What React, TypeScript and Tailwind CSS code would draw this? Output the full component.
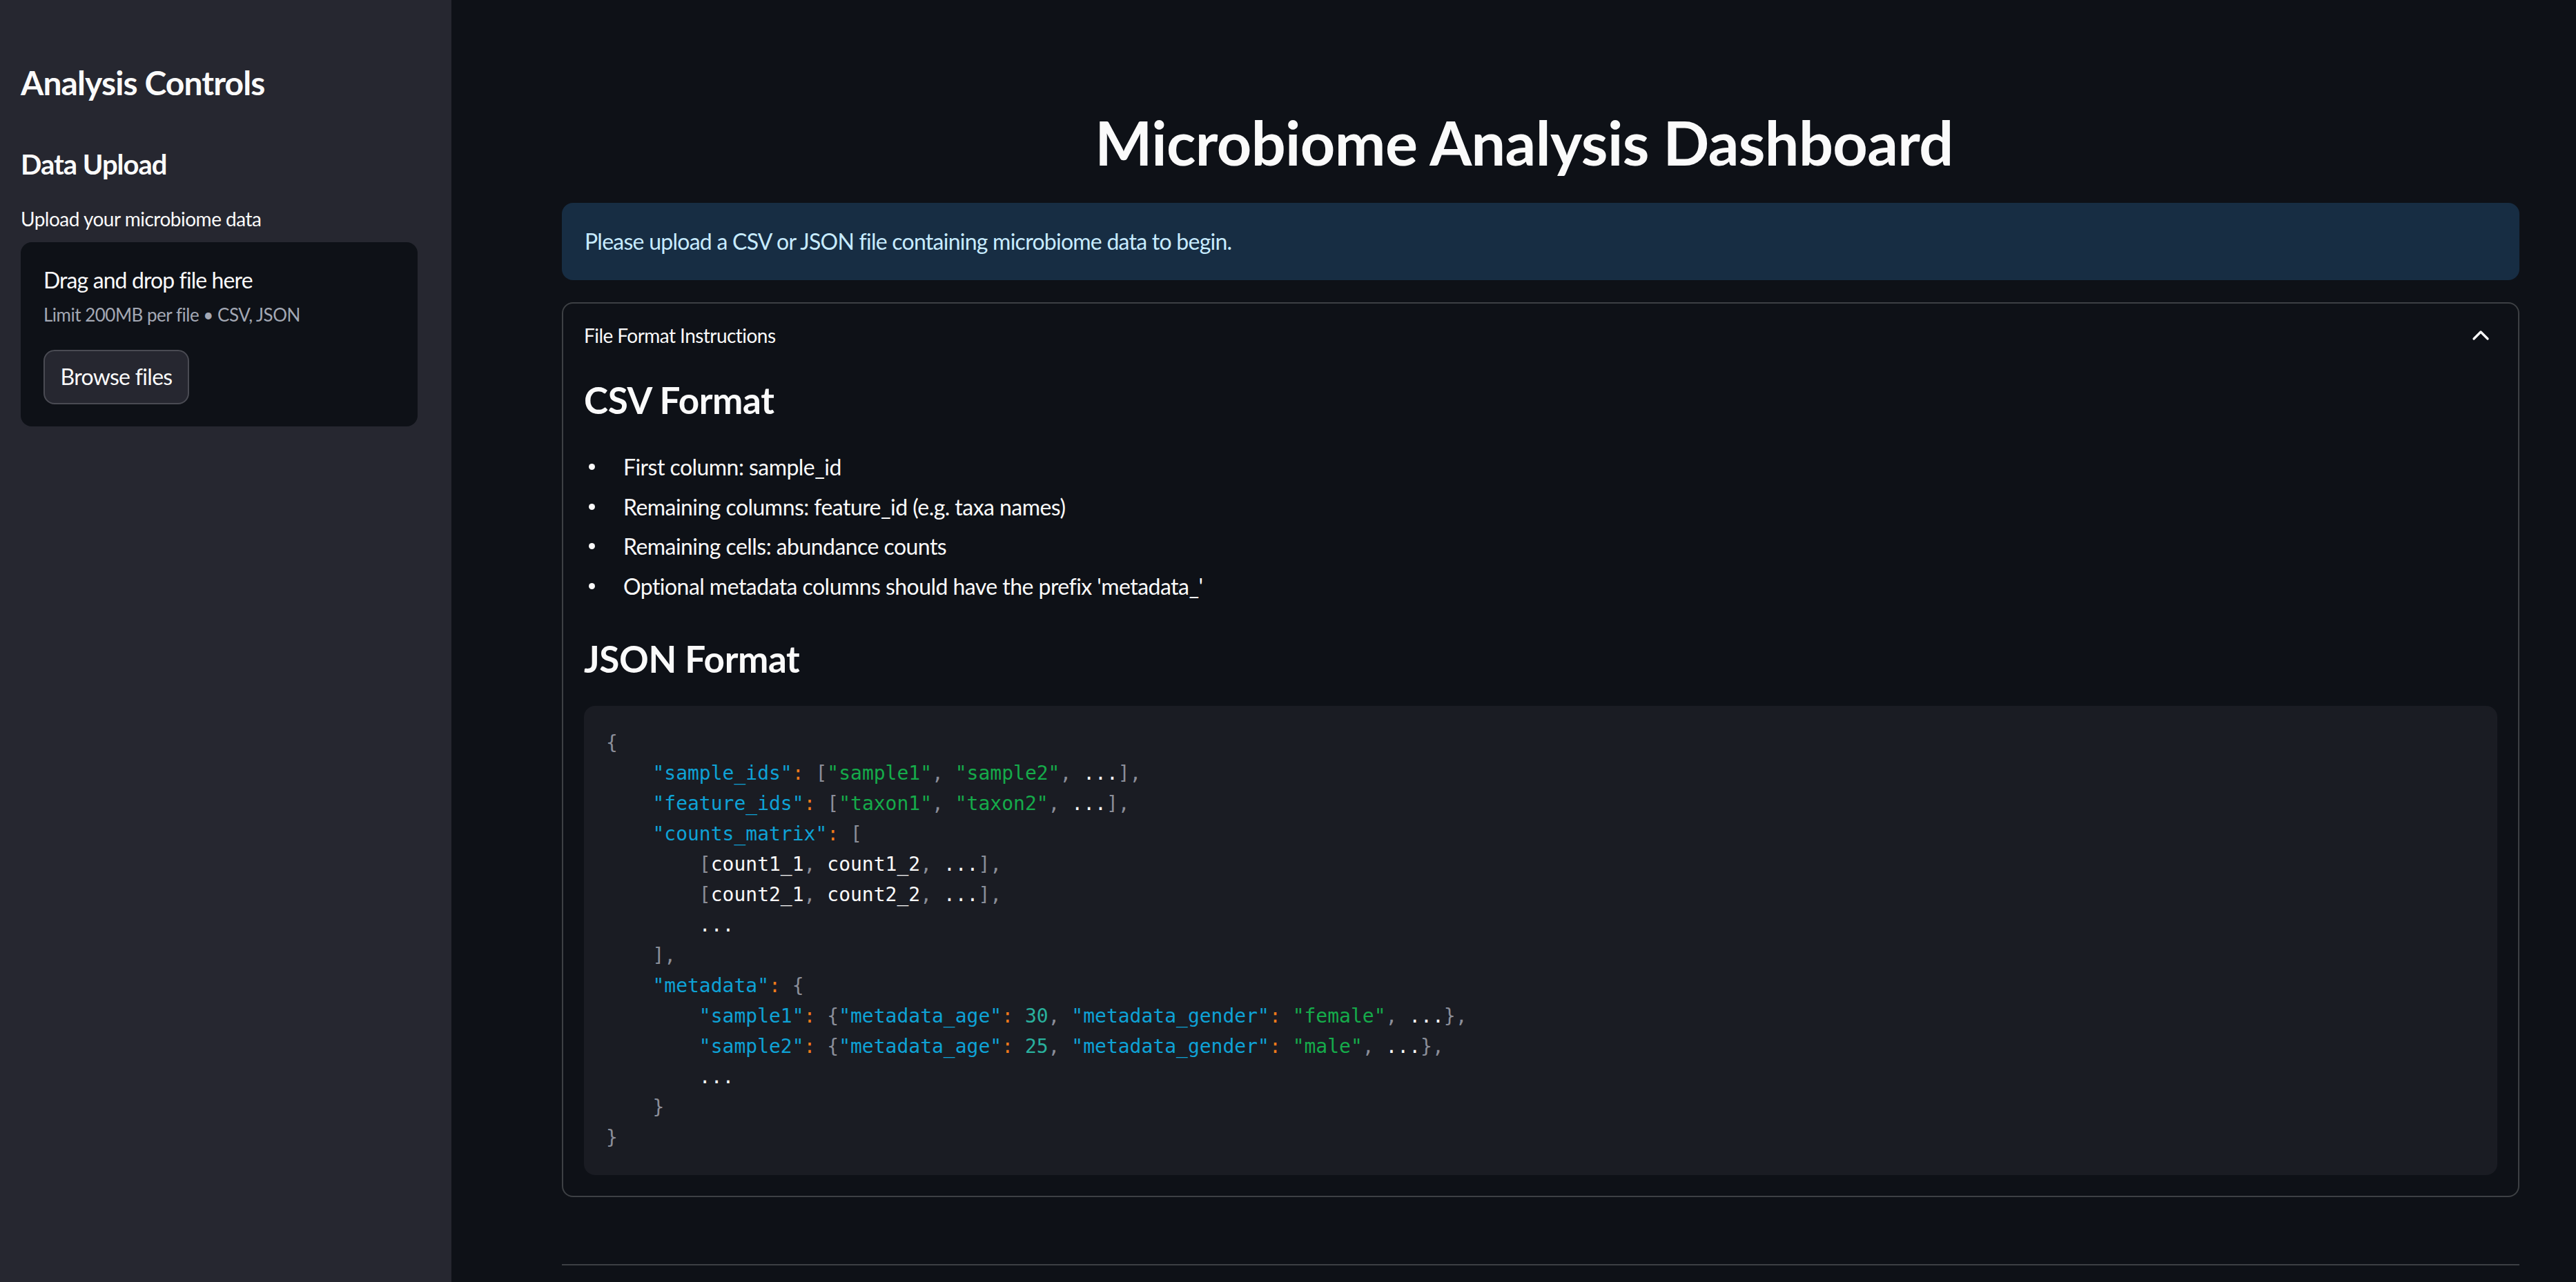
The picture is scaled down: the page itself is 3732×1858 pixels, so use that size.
import React from "react";

const K = ({ children }: { children: React.ReactNode }) => <span className="text-[#0ea2d6]">{children}</span>;
const S = ({ children }: { children: React.ReactNode }) => <span className="text-[#15ab4a]">{children}</span>;
const C = () => <span className="text-[#f07a1a]">:</span>;
const P = ({ children }: { children: React.ReactNode }) => <span className="text-[#8b8e99]">{children}</span>;
const N = ({ children }: { children: React.ReactNode }) => <span className="text-[#29b09d]">{children}</span>;
const W = ({ children }: { children: React.ReactNode }) => <span className="text-[#fafafa]">{children}</span>;

function Line({ children }: { children?: React.ReactNode }) {
  return <div className="h-[44px] leading-[44px] whitespace-pre">{children}</div>;
}

function Bullet({ children }: { children: React.ReactNode }) {
  return (
    <li className="flex items-center h-[51px] mb-[6.6px] text-[32px] leading-[51px] tracking-[-0.55px]">
      <span className="w-[57px] shrink-0 flex">
        <span className="ml-[7px] w-[9px] h-[9px] rounded-full bg-[#fafafa]" />
      </span>
      <span>{children}</span>
    </li>
  );
}

export default function App() {
  return (
    <div
      className="flex w-full h-[1858px] overflow-hidden bg-[#0e1117] text-[#fafafa]"
      style={{ fontFamily: "Lato, 'Noto Sans', sans-serif" }}
    >
      {/* Sidebar */}
      <aside className="w-[654px] shrink-0 bg-[#262730] pl-[30px] pr-[49px] pt-[91px]">
        <h2 className="text-[48px] leading-[57.6px] font-bold tracking-[-0.9px]">Analysis Controls</h2>
        <h3 className="mt-[65px] text-[40px] leading-[48px] font-bold tracking-[-1px]">Data Upload</h3>
        <div className="mt-[34px] text-[28px] leading-[42px] tracking-[-0.5px]">Upload your microbiome data</div>
        <div className="mt-[13px] h-[267px] rounded-[16px] bg-[#0e1117] pl-[33px] pt-[31px]">
          <div className="text-[32px] leading-[48px] tracking-[-0.9px]">Drag and drop file here</div>
          <div className="mt-[5px] text-[26px] leading-[42px] tracking-[-0.5px] text-[#a3a8b4]">Limit 200MB per file • CSV, JSON</div>
          <button className="mt-[30px] w-[211px] h-[79px] rounded-[16px] border-2 border-[#4a4b53] bg-[#262730] text-[32px] tracking-[-0.7px] text-[#fafafa] flex items-center justify-center">
            Browse files
          </button>
        </div>
      </aside>

      {/* Main */}
      <main className="flex-1 pl-[160px] pr-[82px] pt-[156px]">
        <h1 className="text-center pr-[48px] text-[88px] leading-[100.8px] font-bold tracking-[-0.6px]">
          Microbiome Analysis Dashboard
        </h1>

        <div className="mt-[37px] h-[112px] rounded-[16px] bg-[#172d43] px-[33px] flex items-center text-[32px] leading-[48px] tracking-[-0.75px] text-[#c7ebff]">
          Please upload a CSV or JSON file containing microbiome data to begin.
        </div>

        <div className="mt-[32px] h-[1297px] rounded-[16px] border-2 border-[#3d4044]">
          <div className="h-[92px] flex items-center justify-between pl-[30px] pr-[34px]">
            <span className="text-[28px] leading-[42px] tracking-[-0.55px]">File Format Instructions</span>
            <svg width="40" height="40" viewBox="0 0 24 24" fill="none" stroke="#fafafa" strokeWidth="2" strokeLinecap="round" strokeLinejoin="round">
              <path d="m18 15-6-6-6 6" />
            </svg>
          </div>

          <div className="px-[30px]">
            <h3 className="mt-[17px] text-[53px] leading-[62.4px] font-bold tracking-[-0.4px]">CSV Format</h3>
            <ul className="mt-[40px]">
              <Bullet>First column: sample_id</Bullet>
              <Bullet>Remaining columns: feature_id (e.g. taxa names)</Bullet>
              <Bullet>Remaining cells: abundance counts</Bullet>
              <Bullet>Optional metadata columns should have the prefix 'metadata_'</Bullet>
            </ul>
            <h3 className="mt-[49px] text-[53px] leading-[62.4px] font-bold tracking-[-0.4px]">JSON Format</h3>

            <pre
              className="mt-[37px] h-[680px] rounded-[16px] bg-[#1a1c23] px-[32px] py-[32px] text-[28px]"
              style={{ fontFamily: "'DejaVu Sans Mono', 'Liberation Mono', monospace" }}
            >
              <Line><P>{"{"}</P></Line>
              <Line>{"    "}<K>"sample_ids"</K><C /> <P>[</P><S>"sample1"</S><P>,</P> <S>"sample2"</S><P>,</P> <W>...</W><P>],</P></Line>
              <Line>{"    "}<K>"feature_ids"</K><C /> <P>[</P><S>"taxon1"</S><P>,</P> <S>"taxon2"</S><P>,</P> <W>...</W><P>],</P></Line>
              <Line>{"    "}<K>"counts_matrix"</K><C /> <P>[</P></Line>
              <Line>{"        "}<P>[</P><W>count1_1</W><P>,</P> <W>count1_2</W><P>,</P> <W>...</W><P>],</P></Line>
              <Line>{"        "}<P>[</P><W>count2_1</W><P>,</P> <W>count2_2</W><P>,</P> <W>...</W><P>],</P></Line>
              <Line>{"        "}<W>...</W></Line>
              <Line>{"    "}<P>],</P></Line>
              <Line>{"    "}<K>"metadata"</K><C /> <P>{"{"}</P></Line>
              <Line>{"        "}<K>"sample1"</K><C /> <P>{"{"}</P><K>"metadata_age"</K><C /> <N>30</N><P>,</P> <K>"metadata_gender"</K><C /> <S>"female"</S><P>,</P> <W>...</W><P>{"},"}</P></Line>
              <Line>{"        "}<K>"sample2"</K><C /> <P>{"{"}</P><K>"metadata_age"</K><C /> <N>25</N><P>,</P> <K>"metadata_gender"</K><C /> <S>"male"</S><P>,</P> <W>...</W><P>{"},"}</P></Line>
              <Line>{"        "}<W>...</W></Line>
              <Line>{"    "}<P>{"}"}</P></Line>
              <Line><P>{"}"}</P></Line>
            </pre>
          </div>
        </div>

        <hr className="mt-[97px] border-0 h-[2px] bg-[#3d4044]" />
      </main>
    </div>
  );
}
